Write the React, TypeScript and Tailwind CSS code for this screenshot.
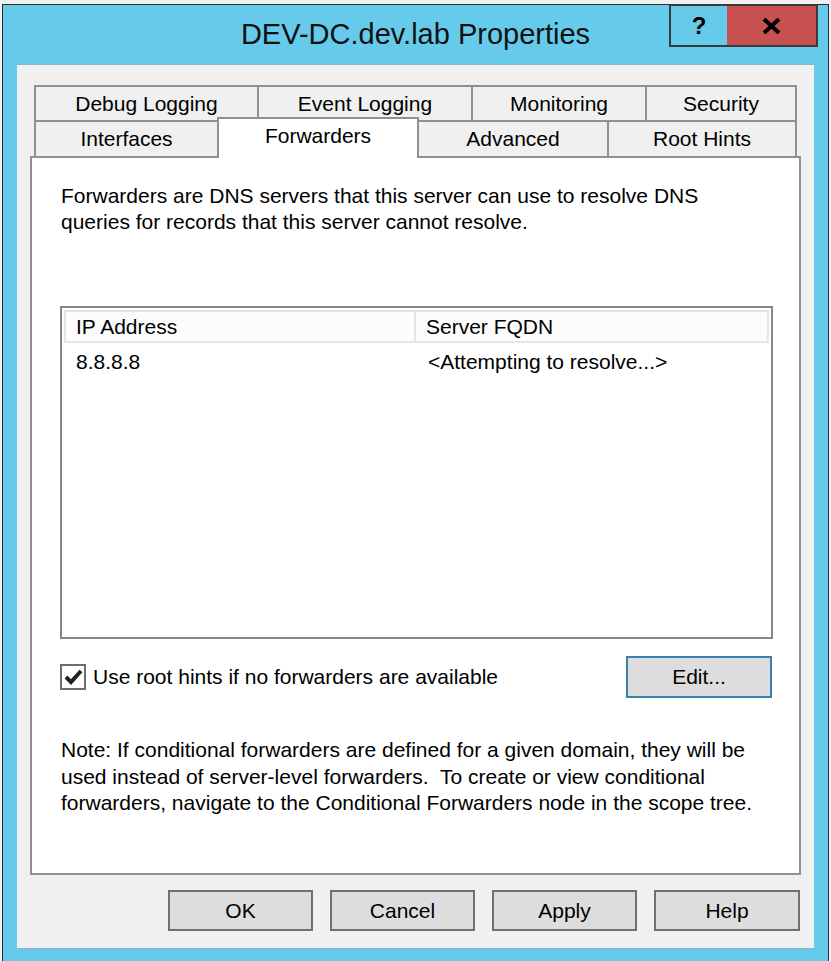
export default function App() {
  const tabBorder = "border-[#8e9096]";
  return (
    <div className="w-[831px] h-[961px] overflow-hidden bg-[#f0f0f0] pt-[4px] pl-[2px] font-['Liberation_Sans',Arial,sans-serif] text-black">
      <div className="w-[827px] h-[957px] border-t border-l border-r border-[#2b2b2b] bg-[#66cbea]">
        {/* Title bar */}
        <div className="relative h-[59px] flex items-center justify-center">
          <span className="text-[29px] leading-none text-[#111]">DEV-DC.dev.lab Properties</span>
          <div className="absolute top-[-1px] left-[666px] w-[60px] h-[43px] border-2 border-[#3a3a3a] flex items-center justify-center">
            <span className="text-[24px] font-bold leading-none">?</span>
          </div>
          <div className="absolute top-[-1px] left-[724px] w-[91px] h-[43px] border-t-2 border-r-2 border-b-2 border-[#3a3a3a] bg-[#c75050] flex items-center justify-center">
            <svg width="19" height="16" viewBox="0 0 19 16">
              <path d="M2 1 L17 15 M17 1 L2 15" stroke="#000" strokeWidth="4" fill="none" />
            </svg>
          </div>
        </div>
        {/* Client */}
        <div className="ml-[14px] w-[797px] h-[885px] border-y border-[#8fb1c7] bg-[#f0f0f0] pt-[20px]">
          <div className="ml-[13px] w-[771px]">
            {/* Tab row 1 */}
            <div className="flex pl-[4px] h-[35px] text-[21px]">
              <div className={`w-[223px] h-[35px] border-t-2 border-l-2 ${tabBorder} flex items-center justify-center`}>Debug Logging</div>
              <div className={`w-[214px] h-[35px] border-t-2 border-l-2 ${tabBorder} flex items-center justify-center`}>Event Logging</div>
              <div className={`w-[174px] h-[35px] border-t-2 border-l-2 ${tabBorder} flex items-center justify-center`}>Monitoring</div>
              <div className={`w-[152px] h-[35px] border-t-2 border-l-2 border-r-2 ${tabBorder} flex items-center justify-center`}>Security</div>
            </div>
            {/* Tab row 2 */}
            <div className="flex items-end pl-[4px] h-[36px] text-[21px]">
              <div className={`w-[183px] h-[36px] border-t-2 border-l-2 ${tabBorder} flex items-center justify-center`}>Interfaces</div>
              <div className={`relative z-10 w-[202px] h-[41px] -mb-[2px] bg-white border-t-2 border-l-2 border-r-2 ${tabBorder} flex items-start justify-center pt-[4px] leading-[26px]`}>Forwarders</div>
              <div className={`w-[188px] h-[36px] border-t-2 ${tabBorder} flex items-center justify-center`}>Advanced</div>
              <div className={`w-[190px] h-[36px] border-t-2 border-l-2 border-r-2 ${tabBorder} flex items-center justify-center`}>Root Hints</div>
            </div>
            {/* Panel */}
            <div className={`h-[719px] border-2 ${tabBorder} bg-white pl-[28px] pr-[26px] pt-[25px] flex flex-col text-[21px]`}>
              <div className="leading-[26px] whitespace-nowrap pl-[1px]">
                Forwarders are DNS servers that this server can use to resolve DNS
                <br />
                queries for records that this server cannot resolve.
              </div>
              {/* List view */}
              <div className="mt-[71px] h-[333px] border-2 border-[#828790] p-[2px] bg-white">
                <div className="flex h-[33px] bg-[#fcfcfc] border-2 border-[#e5e5e5]">
                  <div className="w-[350px] border-r-2 border-[#e5e5e5] flex items-center pl-[10px]">IP Address</div>
                  <div className="flex-1 flex items-center pl-[10px]">Server FQDN</div>
                </div>
                <div className="flex h-[38px] items-center">
                  <div className="w-[354px] pl-[12px]">8.8.8.8</div>
                  <div className="flex-1 pl-[10px]">&lt;Attempting to resolve...&gt;</div>
                </div>
              </div>
              {/* Checkbox row */}
              <div className="mt-[17px] h-[42px] flex items-center justify-between">
                <div className="flex items-center">
                  <div className="w-[26px] h-[26px] border-2 border-[#6d6d6d] bg-white flex items-center justify-center">
                    <svg width="19" height="18" viewBox="0 0 19 18">
                      <path d="M2 9 L7 14 L17 3" stroke="#222" strokeWidth="4" fill="none" />
                    </svg>
                  </div>
                  <span className="ml-[7px]">Use root hints if no forwarders are available</span>
                </div>
                <div className="mr-[1px] w-[146px] h-[42px] border-2 border-[#3c7fb1] bg-[#dddddd] flex items-center justify-center">Edit...</div>
              </div>
              {/* Note */}
              <div className="mt-[39px] leading-[26.5px] whitespace-nowrap pl-[1px]">
                Note: If conditional forwarders are defined for a given domain, they will be
                <br />
                used instead of server-level forwarders.&nbsp; To create or view conditional
                <br />
                forwarders, navigate to the Conditional Forwarders node in the scope tree.
              </div>
            </div>
            {/* Bottom buttons */}
            <div className="mt-[15px] flex justify-end gap-[17px] pr-[1px] text-[21px]">
              <div className="w-[145px] h-[41px] border-2 border-[#707070] bg-[#dddddd] flex items-center justify-center">OK</div>
              <div className="w-[145px] h-[41px] border-2 border-[#707070] bg-[#dddddd] flex items-center justify-center">Cancel</div>
              <div className="w-[145px] h-[41px] border-2 border-[#707070] bg-[#dddddd] flex items-center justify-center">Apply</div>
              <div className="w-[146px] h-[41px] border-2 border-[#707070] bg-[#dddddd] flex items-center justify-center">Help</div>
            </div>
          </div>
        </div>
      </div>
    </div>
  );
}
